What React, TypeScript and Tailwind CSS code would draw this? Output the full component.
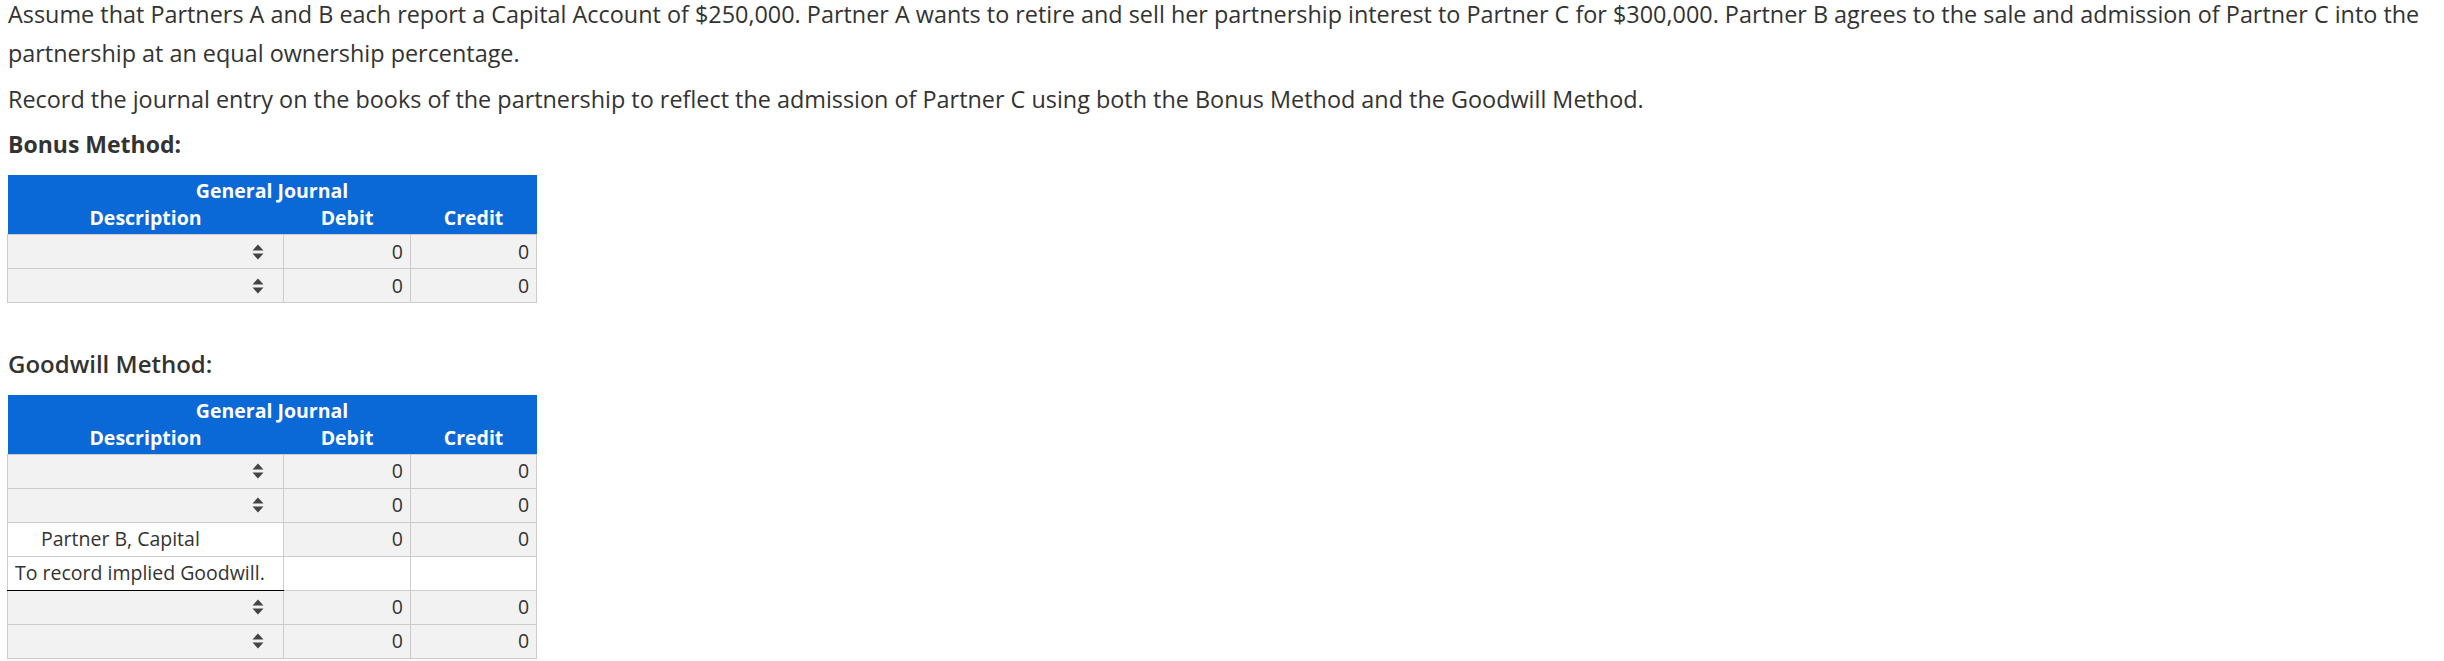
import React from 'react';

type Row = {
  kind: 'select' | 'account' | 'memo';
  label?: string;
};

const bonusRows: Row[] = [{ kind: 'select' }, { kind: 'select' }];

const goodwillRows: Row[] = [
  { kind: 'select' },
  { kind: 'select' },
  { kind: 'account', label: 'Partner B, Capital' },
  { kind: 'memo', label: 'To record implied Goodwill.' },
  { kind: 'select' },
  { kind: 'select' },
];

function SortIcon() {
  return (
    <svg width="12" height="18" viewBox="0 0 12 18" className="block">
      <polygon points="0.5,7.5 6,1.5 11.5,7.5" fill="#444" />
      <polygon points="0.5,10.5 6,16.5 11.5,10.5" fill="#444" />
    </svg>
  );
}

function JournalTable({ rows }: { rows: Row[] }) {
  return (
    <table className="border-collapse text-[19.5px] text-[#333] w-[529px] table-fixed">
      <colgroup>
        <col className="w-[276px]" />
        <col className="w-[127px]" />
        <col className="w-[126px]" />
      </colgroup>
      <thead className="bg-[#0b68d7] text-white">
        <tr>
          <th colSpan={3} className="h-[29px] pt-[3px] font-bold leading-[26px] text-center">
            General Journal
          </th>
        </tr>
        <tr>
          <th className="h-[30px] pb-[3px] font-bold leading-[27px] text-center">Description</th>
          <th className="h-[30px] pb-[3px] font-bold leading-[27px] text-center">Debit</th>
          <th className="h-[30px] pb-[3px] font-bold leading-[27px] text-center">Credit</th>
        </tr>
      </thead>
      <tbody>
        {rows.map((row, i) => {
          if (row.kind === 'memo') {
            return (
              <tr key={i} className="h-[34px]">
                <td className="border border-[#ccc] border-b-black bg-white px-[7px] whitespace-nowrap">
                  {row.label}
                </td>
                <td className="border border-[#ccc] bg-white"></td>
                <td className="border border-[#ccc] bg-white"></td>
              </tr>
            );
          }
          return (
            <tr key={i} className="h-[34px]">
              {row.kind === 'select' ? (
                <td className="border border-[#ccc] bg-[#f2f2f2] pr-[19px]">
                  <div className="flex justify-end">
                    <SortIcon />
                  </div>
                </td>
              ) : (
                <td className="border border-[#ccc] bg-white pl-[33px] whitespace-nowrap">{row.label}</td>
              )}
              <td className="border border-[#ccc] bg-[#f2f2f2] pr-[7px] text-right">0</td>
              <td className="border border-[#ccc] bg-[#f2f2f2] pr-[7px] text-right">0</td>
            </tr>
          );
        })}
      </tbody>
    </table>
  );
}

export default function App() {
  return (
    <div
      className="bg-white w-[2444px] h-[661px] overflow-hidden px-[7px] text-[#333]"
      style={{ fontFamily: '"Open Sans", "Noto Sans", sans-serif' }}
    >
      <div className="-mt-[5px]">
        <p className="pl-[1px] text-[23.4px] leading-[38.5px]">
          Assume that Partners A and B each report a Capital Account of $250,000. Partner A wants to retire and sell her
          partnership interest to Partner C for $300,000. Partner B agrees to the sale and admission of Partner C into the
          partnership at an equal ownership percentage.
        </p>
        <p className="pl-[1px] mt-[8px] text-[23.4px] leading-[38.5px]">
          Record the journal entry on the books of the partnership to reflect the admission of Partner C using both the
          Bonus Method and the Goodwill Method.
        </p>
        <p className="pl-[1px] mt-[6px] text-[23px] leading-[38.5px] font-bold">Bonus Method:</p>
        <div className="mt-[12px]">
          <JournalTable rows={bonusRows} />
        </div>
        <p className="pl-[1px] mt-[42px] text-[24px] leading-[38.5px] font-semibold">Goodwill Method:</p>
        <div className="mt-[11px]">
          <JournalTable rows={goodwillRows} />
        </div>
      </div>
    </div>
  );
}
